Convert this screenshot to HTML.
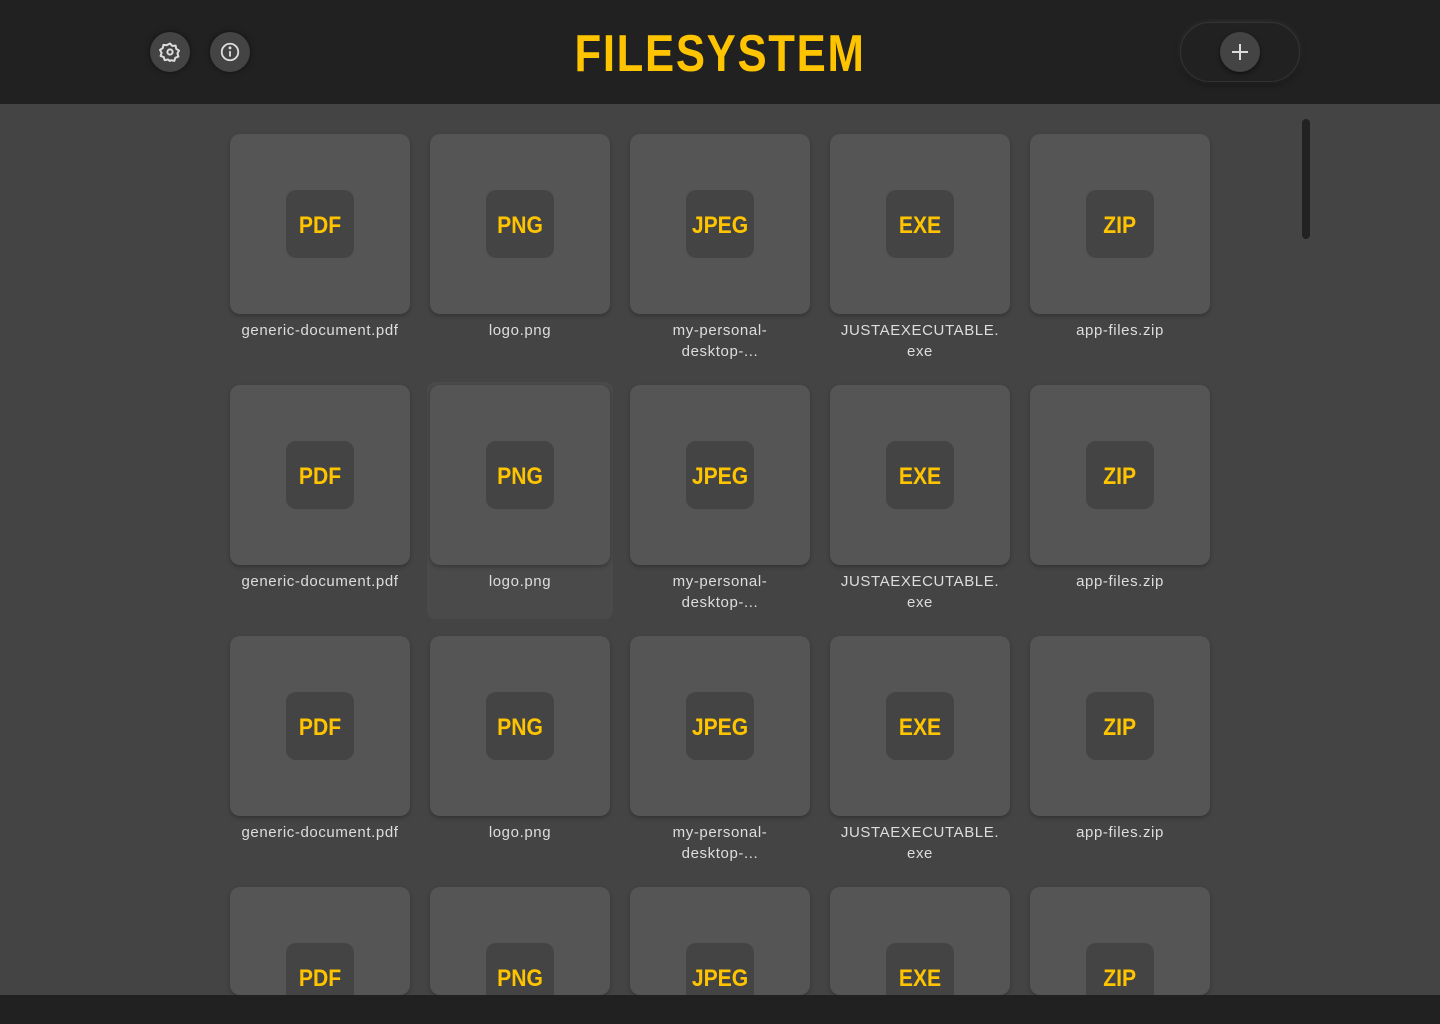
<!DOCTYPE html>
<html style="overflow:hidden;height:1024px"><head><style>
*{margin:0;padding:0;box-sizing:border-box}
body{width:1440px;height:1024px;background:#444;font-family:"Liberation Sans",sans-serif;overflow:hidden;position:relative}
.wrap{position:absolute;left:0;top:0;width:1440px;height:995px;overflow:hidden}
.hdr{position:absolute;left:0;top:0;width:1440px;height:104px;background:#212121}
.cb{position:absolute;width:40px;height:40px;border-radius:50%;background:#444;box-shadow:0 0 6px rgba(0,0,0,.5);display:flex;align-items:center;justify-content:center}
.title{position:absolute;left:520px;width:400px;top:24px;text-align:center;color:#ffc400;font-weight:bold;font-size:52px;line-height:60px;transform:scaleX(.84);letter-spacing:2px}
.pill{position:absolute;left:1180px;top:22px;width:120px;height:60px;border-radius:30px;background:#212121;border:1px solid #333;box-shadow:0 0 6px rgba(255,255,255,.12),0 2px 6px rgba(0,0,0,.6)}
.card{position:absolute;width:180px;height:180px;background:#555;border-radius:10px;box-shadow:0 2px 4px rgba(0,0,0,.25)}
.badge{position:absolute;left:56px;top:56px;width:68px;height:68px;border-radius:10px;background:#444;color:#ffc400;font-weight:bold;font-size:24px;display:flex;align-items:center;justify-content:center;padding-top:4px}
.badge span{display:inline-block;transform:scaleX(.88)}
.lbl{position:absolute;width:180px;text-align:center;color:#ddd;font-size:15px;line-height:21px;letter-spacing:.6px}
.hov{position:absolute;left:427px;top:382px;width:186px;height:237px;border-radius:8px;background:#4a4a4a}
.sb{position:absolute;left:1302px;top:119px;width:8px;height:120px;border-radius:4px;background:#222}
.bot{position:absolute;left:0;top:995px;width:1440px;height:29px;background:#212121}
</style></head><body>
<div class="wrap">
<div class="hov"></div>
<div id="grid"></div>
</div>
<div class="hdr">
<div class="cb" style="left:150px;top:32px"><svg width="24" height="24" viewBox="0 0 24 24" fill="none" stroke="#ddd" stroke-width="2" stroke-linejoin="round"><path d="M12 3.5l2.3 2.4 3.3-.3.6 3.2 2.8 1.8-1.6 2.9 1 3.1-3.1 1.2-1 3.1-3.2-.7L12 21l-2.1-1.5-3.2.7-1-3.1-3.1-1.2 1-3.1-1.6-2.9 2.8-1.8.6-3.2 3.3.3z"/><circle cx="12" cy="12" r="2.6"/></svg></div>
<div class="cb" style="left:210px;top:32px"><svg width="22" height="22" viewBox="0 0 24 24" fill="none" stroke="#ddd" stroke-width="2"><circle cx="12" cy="12" r="9"/><path d="M12 11v6"/><circle cx="12" cy="7.5" r=".6" fill="#ddd"/></svg></div>
<div class="title">FILESYSTEM</div>
<div class="pill"><div class="cb" style="left:39px;top:9px;box-shadow:0 2px 4px rgba(0,0,0,.5)"><svg width="20" height="20" viewBox="0 0 20 20" stroke="#ddd" stroke-width="2"><path d="M10 2v16M2 10h16"/></svg></div></div>
</div>
<div class="sb"></div>
<div class="bot"></div>
<script>
var t=[["PDF","generic-document.pdf"],["PNG","logo.png"],["JPEG","my-personal-<br>desktop-..."],["EXE","JUSTAEXECUTABLE.<br>exe"],["ZIP","app-files.zip"]];
var h="";
for(var r=0;r<4;r++)for(var c=0;c<5;c++){var x=230+c*200,y=134+r*251;
var ch=r==3?(995-y):180;
h+='<div class="card" style="left:'+x+'px;top:'+y+'px;height:'+ch+'px"><div class="badge"><span>'+t[c][0]+'</span></div></div>';
if(r<3)h+='<div class="lbl" style="left:'+x+'px;top:'+(y+186)+'px">'+t[c][1]+'</div>';}
document.getElementById("grid").innerHTML=h;
</script>
</body></html>
